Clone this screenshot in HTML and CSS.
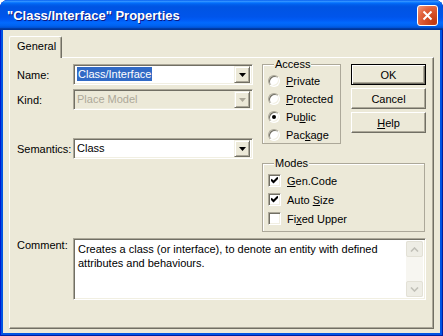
FILE: index.html
```html
<!DOCTYPE html>
<html>
<head>
<meta charset="utf-8">
<link rel="stylesheet" href="styles.css">
</head>
<body>
<div class="window">
  <div class="titlebar">
    <span class="title">"Class/Interface" Properties</span>
    <span class="close"><svg width="13" height="13" viewBox="0 0 13 13"><path d="M2.5 2.5L10.5 10.5M10.5 2.5L2.5 10.5" stroke="#fff" stroke-width="2"/></svg></span>
  </div>
  <div class="client">
    <div class="tabs"><div class="tab">General</div></div>
    <div class="panel">
      <div class="top">
        <div class="form">
          <div class="row">
            <span class="lbl">Name:</span>
            <div class="combo"><span class="val"><span class="sel">Class/Interface</span></span><span class="drop"><svg width="7" height="4" viewBox="0 0 7 4"><path d="M0 0H7L3.5 4Z" fill="#000"/></svg></span></div>
          </div>
          <div class="row kind">
            <span class="lbl">Kind:</span>
            <div class="combo disabled"><span class="val">Place Model</span><span class="drop"><svg width="7" height="4" viewBox="0 0 7 4"><path d="M0 0H7L3.5 4Z" fill="#ACA899"/></svg></span></div>
          </div>
          <div class="row sem">
            <span class="lbl">Semantics:</span>
            <div class="combo"><span class="val">Class</span><span class="drop"><svg width="7" height="4" viewBox="0 0 7 4"><path d="M0 0H7L3.5 4Z" fill="#000"/></svg></span></div>
          </div>
        </div>
        <div class="side">
          <div class="side-top">
            <fieldset class="group access">
              <legend>Access</legend>
              <div class="opt"><span class="radio"></span><span><u>P</u>rivate</span></div>
              <div class="opt"><span class="radio"></span><span><u>P</u>rotected</span></div>
              <div class="opt"><span class="radio on"></span><span>Pu<u>b</u>lic</span></div>
              <div class="opt"><span class="radio"></span><span>Pac<u>k</u>age</span></div>
            </fieldset>
            <div class="buttons">
              <button class="btn default">OK</button>
              <button class="btn">Cancel</button>
              <button class="btn"><u>H</u>elp</button>
            </div>
          </div>
          <fieldset class="group modes">
            <legend>Modes</legend>
            <div class="opt chk-row"><span class="check"><svg width="7" height="7" viewBox="0 0 7 7"><path d="M0 2.5L2.5 5L7 0.5" fill="none" stroke="#000" stroke-width="2"/></svg></span><span><u>G</u>en.Code</span></div>
            <div class="opt chk-row"><span class="check"><svg width="7" height="7" viewBox="0 0 7 7"><path d="M0 2.5L2.5 5L7 0.5" fill="none" stroke="#000" stroke-width="2"/></svg></span><span>Auto <u>S</u>ize</span></div>
            <div class="opt chk-row"><span class="check"></span><span>Fi<u>x</u>ed Upper</span></div>
          </fieldset>
        </div>
      </div>
      <div class="comment-row">
        <span class="lbl">Comment:</span>
        <div class="memo">
          <div class="memo-text">Creates a class (or interface), to denote an entity with defined attributes and behaviours.</div>
          <div class="vscroll">
            <span class="sbtn"><svg width="9" height="5" viewBox="0 0 9 5"><path d="M1 4.5L4.5 1L8 4.5" fill="none" stroke="#C1C0B8" stroke-width="1.6"/></svg></span>
            <span class="track"></span>
            <span class="sbtn"><svg width="9" height="5" viewBox="0 0 9 5"><path d="M1 0.5L4.5 4L8 0.5" fill="none" stroke="#C1C0B8" stroke-width="1.6"/></svg></span>
          </div>
        </div>
      </div>
    </div>
  </div>
</div>
</body>
</html>
```

FILE: styles.css
```css
* { box-sizing: border-box; }
body {
  margin: 0;
  font-family: "Liberation Sans", Arial, sans-serif;
  font-size: 11px;
  color: #000;
}
.window {
  width: 443px;
  height: 336px;
  display: flex;
  flex-direction: column;
  background: #0054E3;
  border-radius: 8px 8px 0 0;
  overflow: hidden;
  box-shadow: inset 1px 0 #0019CF, inset -1px 0 #001EA0, inset 0 -1px #001EA0;
}
.titlebar {
  height: 30px;
  flex: none;
  display: flex;
  align-items: center;
  justify-content: space-between;
  padding: 0 5px 0 7px;
  background: linear-gradient(to bottom, #0058EE 0%, #3593FF 4%, #288EFF 6%, #127DFF 8%, #036FFC 10%, #0262EE 14%, #0057E5 20%, #0054E3 24%, #0055EB 56%, #005BF5 66%, #026AFE 76%, #0062EF 86%, #0052D6 92%, #0040AB 94%, #003092 100%);
}
.title {
  color: #fff;
  font-weight: bold;
  font-size: 13px;
  text-shadow: 1px 1px #0A1883;
}
.close {
  width: 21px;
  height: 21px;
  border: 1px solid #fff;
  border-radius: 3px;
  display: flex;
  align-items: center;
  justify-content: center;
  background: radial-gradient(circle at 85% 85%, #C1380F 0%, #D9532C 45%, #E2643E 65%, #F29A7E 100%);
}
.client {
  flex: 1;
  margin: 0 3px 3px;
  background: #ECE9D8;
  padding: 6px 6px 4px;
  display: flex;
  flex-direction: column;
}
.tabs { display: flex; height: 21px; flex: none; }
.tab {
  position: relative;
  z-index: 1;
  width: 53px;
  height: 22px;
  background: #ECE9D8;
  border: 1px solid;
  border-color: #fff #716F64 transparent #fff;
  border-bottom: none;
  border-radius: 2px 2px 0 0;
  box-shadow: inset -1px 0 #ACA899;
  padding-left: 7px;
  line-height: 19px;
}
.panel {
  flex: 1;
  border: 1px solid;
  border-color: #fff #716F64 #716F64 #fff;
  box-shadow: inset -1px -1px #ACA899;
  padding: 0 0 0 7px;
  display: flex;
  flex-direction: column;
}
.top { display: flex; }
.form {
  width: 236px;
  padding-top: 6px;
  display: flex;
  flex-direction: column;
}
.row { display: flex; align-items: center; height: 21px; }
.row.kind { margin-top: 4px; }
.row.sem { margin-top: 28px; }
.lbl { width: 56px; flex: none; }
.combo {
  width: 180px;
  height: 21px;
  display: flex;
  align-items: center;
  background: #fff;
  border: 1px solid;
  border-color: #ACA899 #fff #fff #ACA899;
  box-shadow: inset 1px 1px #716F64, inset -1px -1px #F1EFE2;
  padding: 2px;
}
.combo.disabled { background: #ECE9D8; color: #ACA899; }
.val { flex: 1; padding-left: 1px; line-height: 15px; }
.sel { background: #316AC5; color: #fff; padding: 1px 1px; }
.drop {
  width: 16px;
  height: 17px;
  display: flex;
  align-items: center;
  justify-content: center;
  background: #ECE9D8;
  border: 1px solid;
  border-color: #F1EFE2 #716F64 #716F64 #F1EFE2;
  box-shadow: inset 1px 1px #fff, inset -1px -1px #ACA899;
}
.side { margin-left: 9px; display: flex; flex-direction: column; }
.side-top { display: flex; gap: 10px; }
.group {
  margin: 0;
  padding: 0 0 0 5px;
  min-width: 0;
  border: 1px solid #ACA899;
  box-shadow: inset 1px 1px #fff;
}
.group legend {
  margin-left: 6px;
  padding: 0 1px;
  line-height: 13px;
  background: #ECE9D8;
}
.access { width: 79px; height: 86px; padding-top: 1px; }
.opt { display: flex; align-items: center; height: 18px; }
.radio {
  width: 12px;
  height: 12px;
  flex: none;
  margin-right: 6px;
  border-radius: 50%;
  background: #fff;
  border: 1px solid;
  border-color: #ACA899 #fff #fff #ACA899;
  box-shadow: inset 1px 1px #716F64, inset -1px -1px #F1EFE2;
  display: flex;
  align-items: center;
  justify-content: center;
}
.radio.on::after {
  content: "";
  width: 4px;
  height: 4px;
  border-radius: 50%;
  background: #000;
}
.buttons { display: flex; flex-direction: column; gap: 3px; padding-top: 6px; }
.btn {
  width: 75px;
  height: 21px;
  padding: 0;
  font: inherit;
  color: #000;
  background: #ECE9D8;
  border: 1px solid;
  border-color: #fff #716F64 #716F64 #fff;
  box-shadow: inset -1px -1px #ACA899;
}
.btn.default {
  border: 1px solid #000;
  box-shadow: inset 1px 1px #fff, inset -1px -1px #716F64, inset -2px -2px #ACA899;
}
.modes { width: 163px; height: 75px; margin-top: 13px; padding-top: 1px; }
.chk-row { height: 19px; }
.check {
  width: 13px;
  height: 13px;
  flex: none;
  margin-right: 6px;
  background: #fff;
  border: 1px solid;
  border-color: #ACA899 #fff #fff #ACA899;
  box-shadow: inset 1px 1px #716F64, inset -1px -1px #F1EFE2;
  display: flex;
  align-items: center;
  justify-content: center;
}
.comment-row { display: flex; margin-top: 6px; }
.comment-row .lbl { padding-top: 1px; }
.memo {
  width: 353px;
  height: 62px;
  display: flex;
  background: #fff;
  border: 1px solid;
  border-color: #ACA899 #fff #fff #ACA899;
  box-shadow: inset 1px 1px #716F64, inset -1px -1px #F1EFE2;
  padding: 2px;
}
.memo-text { flex: 1; padding: 1px 2px; line-height: 14px; }
.vscroll {
  width: 17px;
  display: flex;
  flex-direction: column;
  background: #F7F6F1;
}
.sbtn {
  height: 16px;
  display: flex;
  align-items: center;
  justify-content: center;
  background: #EEEDE5;
  border: 1px solid #E3E1D6;
  border-radius: 2px;
}
.track { flex: 1; }
```
